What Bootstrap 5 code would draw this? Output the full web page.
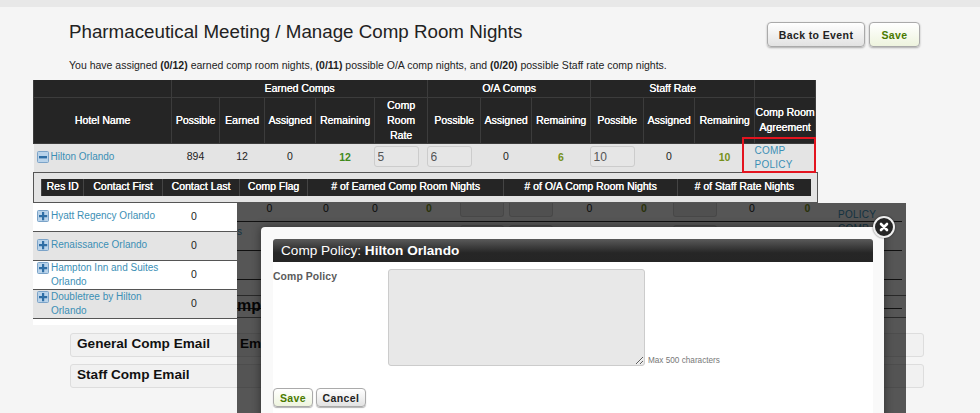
<!DOCTYPE html>
<html lang="en">
<head>
  <meta charset="UTF-8">
  <meta name="viewport" content="width=device-width, initial-scale=1.0">
  <title>Manage Comp Room Nights</title>
  <link rel="stylesheet" href="https://cdn.jsdelivr.net/npm/bootstrap@5.3.3/dist/css/bootstrap.min.css">
  <style>
    html, body { height: 413px; overflow: hidden; }
    body { background: #f5f5f5; font-family: "Liberation Sans", Arial, sans-serif; color: #222; font-size: 10.5px; }
    .page-wrap { position: relative; height: 413px; border-top: 7px solid #e8e8e8; overflow: hidden; }
    .head-row { padding: 13px 60px 0 69px; height: 47px; }
    .head-row h1 { font-size: 18.75px; font-weight: 400; margin: 0; line-height: 24px; color: #222; }
    .intro { margin: 0 0 0 69px; height: 26px; font-size: 10.5px; line-height: 22px; color: #222; }
    .top-btns { gap: 4px; margin-top: 2px; }
    .gloss-btn { font-family: inherit; font-size: 10.5px; font-weight: 700; letter-spacing: .4px; color: #222; padding: 0; height: 25px; line-height: 22px; border: 1px solid #aaa; border-radius: 4px; background: linear-gradient(#fff, #e2e2e2); box-shadow: 0 1px 2px rgba(0,0,0,.3); }
    .gloss-btn.go { color: #4a7a00; background: linear-gradient(#fff, #eef4de); }
    .btn-back { width: 98px; }
    .btn-save { width: 51px; }

    .main-wrap { position: relative; margin-left: 33px; width: 783px; }
    .grid-tbl { table-layout: fixed; width: 782px; border-collapse: collapse; margin: 0; }
    .grid-tbl th { background: #252525; color: #fff; font-weight: 400; text-shadow: .3px 0 0 #fff; text-align: center; vertical-align: middle; border: 1px solid #3c3c3c; border-top: 0; padding: 0 1px; line-height: 15px; font-size: 10.5px; }
    .grid-tbl tr.top-head th { height: 17px; }
    .grid-tbl tr.sub-head th { height: 46px; }
    .grid-tbl th.agree-head { padding: 0; white-space: nowrap; }
    .grid-tbl td { background: #e4e4e4; height: 27px; text-align: center; vertical-align: middle; padding: 0 0 2px; color: #222; font-size: 10.5px; }
    .grid-tbl td.hotel-cell { text-align: left; padding-left: 3px; }
    .hotel-link { color: #3b8fb5; text-decoration: none; font-size: 10px; line-height: 14px; }
    .pm-icon { width: 12px; height: 12px; vertical-align: -3px; margin-right: 2px; flex: none; }
    .grid-tbl td.num-go { font-weight: 700; color: #3f8a1c; padding: 0; }
    .grid-tbl td.num-olive { font-weight: 700; color: #76901a; padding: 0; }
    .rate-box { display: block; width: 45px; height: 21px; padding: 0 3px; margin-left: -1px; border: 1px solid #ccc; border-radius: 3px; background: #e6e6e6; color: #555; font-size: 12px; font-family: inherit; }
    .grid-tbl td.policy-cell { text-align: left; padding: 0; }
    .policy-link { display: block; color: #3b8fb5; text-decoration: none; font-size: 10px; letter-spacing: .25px; line-height: 14px; }
    .red-box { position: absolute; left: 709px; top: 57px; width: 74px; height: 36px; border: 2px solid #e3141f; pointer-events: none; }

    .res-box { margin-left: 33px; width: 785px; height: 31px; background: #e4e4e4; border: 1px solid #555; padding: 6px 8px 0 7px; }
    .res-tbl { table-layout: fixed; width: 769px; border-collapse: collapse; }
    .res-tbl th { background: #252525; color: #fff; height: 17px; font-size: 10.5px; font-weight: 400; text-shadow: .3px 0 0 #fff; text-align: center; padding: 0; border-left: 1px solid #444; white-space: nowrap; }

    .lower-wrap { height: 122px; }
    .hotel-side { margin-left: 33px; width: 204px; height: 122px; background: #fff; flex: none; }
    .hotel-row { height: 29px; border-bottom: 1px solid #555; padding-left: 4px; }
    .hotel-row.alt { background: #e4e4e4; }
    .hotel-row:nth-child(-n+2) .hotel-name { margin-bottom: 2px; }
    .hotel-name { width: 130px; flex: none; }
    .hotel-name .pm-icon { margin: 1px 2px 0 0; }
    .hotel-name .hotel-link { width: 116px; display: block; }
    .hotel-zero { width: 54px; text-align: center; color: #222; }
    .back-side { width: 665px; height: 122px; flex: none; position: relative; }
    .back-tbl { table-layout: fixed; width: 665px; border-collapse: collapse; }
    .back-tbl td { border-bottom: 1px solid #333; height: 29px; padding: 0; text-align: center; vertical-align: top; font-size: 10.5px; color: #222; }
    .back-tbl tr.cut td { height: 19px; line-height: 10px; }
    .back-tbl .rate-box { width: 44px; height: 21px; margin: 3px 0 0 2px; }
    .back-tbl tr.cut .rate-box { height: 14px; margin-top: 0; border-top: 0; border-radius: 0 0 3px 3px; }
    .back-tbl td.num-olive { font-weight: 700; color: #76901a; }
    .back-tbl td.back-link { color: #3b8fb5; font-size: 10px; text-align: left; letter-spacing: .25px; padding-left: 3px; line-height: 14px; }
    .back-tbl tr.cut td.back-link { padding-top: 6px; line-height: 12px; height: 19px; }
    .back-tbl td.tail-text { text-align: left; color: #3b8fb5; font-size: 10px; padding-top: 2px; }
    .back-head { position: absolute; left: 0; top: 92px; width: 669px; height: 23px; border-top: 1px solid #777; border-bottom: 1px solid #777; font-size: 16px; font-weight: 700; color: #111; line-height: 20px; overflow: hidden; }

    .mail-row { margin: 8px 56px 0 70px; height: 24px; border: 1px solid #ddd; border-radius: 3px; background: #f1f1f1; padding-left: 6px; font-size: 13.6px; font-weight: 700; color: #111; line-height: 20px; gap: 30px; }
    .mail-row + .mail-row { margin-top: 7px; }

    .dim-layer { position: absolute; left: 237px; top: 196px; width: 669px; height: 210px; background: rgba(0,0,0,.65); }
    .comp-modal { position: absolute; left: 24px; top: 24px; width: 623px; height: 200px; background: #f9f9f9; border-radius: 4px 4px 0 0; padding: 12px 11px 0 12px; box-shadow: 0 0 10px rgba(0,0,0,.45); }
    .comp-inner { background: #fff; height: 190px; }
    .comp-title { height: 23px; background: linear-gradient(#5a5a5a, #262626 60%, #252525); color: #fff; font-size: 13.6px; line-height: 23px; padding-left: 8px; border-radius: 3px 3px 0 0; }
    .comp-body { padding-top: 7px; }
    .comp-label { width: 115px; flex: none; font-size: 10.4px; font-weight: 700; color: #5a5a5a; letter-spacing: .1px; }
    .comp-text { width: 257px; height: 97px; background: #e8e8e8; border: 1px solid #ccc; border-radius: 3px; flex: none; display: block; }
    .comp-hint { font-size: 8.2px; color: #777; margin-left: 3px; align-self: flex-end; line-height: 10px; }
    .comp-btns { gap: 3px; margin-top: 22px; }
    .comp-btns .gloss-btn { height: 19px; line-height: 16px; box-shadow: 0 1px 1px rgba(0,0,0,.3); }
    .close-round { position: absolute; right: -11px; top: -11px; width: 22px; height: 22px; padding: 0; border: 2px solid #eee; border-radius: 50%; background: #252525; box-shadow: 0 0 2px rgba(0,0,0,.6); }
    .close-round svg { display: block; margin: 3px; }
  </style>
</head>
<body>
  <div class="page-wrap">
    <!-- Titulo e botoes -->
    <div class="head-row d-flex justify-content-between align-items-start">
      <h1>Pharmaceutical Meeting / Manage Comp Room Nights</h1>
      <div class="top-btns d-flex">
        <button type="button" class="gloss-btn btn-back">Back to Event</button>
        <button type="button" class="gloss-btn go btn-save">Save</button>
      </div>
    </div>
    <p class="intro">You have assigned <b>(0/12)</b> earned comp room nights, <b>(0/11)</b> possible O/A comp nights, and <b>(0/20)</b> possible Staff rate comp nights.</p>

    <!-- Tabela principal -->
    <div class="main-wrap">
      <table class="grid-tbl">
        <colgroup>
          <col style="width:138px"><col style="width:48px"><col style="width:45px"><col style="width:51px"><col style="width:59px"><col style="width:53px">
          <col style="width:53px"><col style="width:51px"><col style="width:59px"><col style="width:53px"><col style="width:51px"><col style="width:60px"><col style="width:61px">
        </colgroup>
        <tr class="top-head">
          <th></th>
          <th colspan="5">Earned Comps</th>
          <th colspan="3">O/A Comps</th>
          <th colspan="3">Staff Rate</th>
          <th></th>
        </tr>
        <tr class="sub-head">
          <th>Hotel Name</th><th>Possible</th><th>Earned</th><th>Assigned</th><th>Remaining</th><th>Comp Room Rate</th>
          <th>Possible</th><th>Assigned</th><th>Remaining</th><th>Possible</th><th>Assigned</th><th>Remaining</th><th class="agree-head">Comp Room<br>Agreement</th>
        </tr>
        <tr>
          <td class="hotel-cell"><a href="#" class="hotel-link"><svg class="pm-icon" viewBox="0 0 12 12"><rect x=".5" y=".5" width="11" height="11" rx="1" fill="#b9d3ea" stroke="#7ba3c8"/><rect x="2" y="5" width="8" height="2.4" fill="#2f6ea5"/></svg>Hilton Orlando</a></td>
          <td>894</td><td>12</td><td>0</td><td class="num-go">12</td>
          <td><input class="rate-box" value="5"></td>
          <td><input class="rate-box" value="6"></td>
          <td>0</td><td class="num-olive">6</td>
          <td><input class="rate-box" value="10"></td>
          <td>0</td><td class="num-olive">10</td>
          <td class="policy-cell"><a href="#" class="policy-link">COMP POLICY</a></td>
        </tr>
      </table>
      <div class="red-box"></div>
    </div>

    <!-- Reservas do hotel aberto -->
    <div class="res-box">
      <table class="res-tbl">
        <colgroup>
          <col style="width:42px"><col style="width:79px"><col style="width:77px"><col style="width:68px"><col style="width:196px"><col style="width:174px"><col style="width:133px">
        </colgroup>
        <tr>
          <th>Res ID</th><th>Contact First</th><th>Contact Last</th><th>Comp Flag</th><th># of Earned Comp Room Nights</th><th># of O/A Comp Room Nights</th><th># of Staff Rate Nights</th>
        </tr>
      </table>
    </div>

    <div class="lower-wrap d-flex">
      <div class="hotel-side">
        <div class="hotel-row d-flex align-items-center">
          <div class="hotel-name d-flex"><svg class="pm-icon" viewBox="0 0 12 12"><rect x=".5" y=".5" width="11" height="11" rx="1" fill="#b9d3ea" stroke="#7ba3c8"/><path d="M2 5h3V2h2.2v3h3v2.2h-3v3H5v-3H2z" fill="#2f6ea5"/></svg><a href="#" class="hotel-link">Hyatt Regency Orlando</a></div>
          <div class="hotel-zero">0</div>
        </div>
        <div class="hotel-row alt d-flex align-items-center">
          <div class="hotel-name d-flex"><svg class="pm-icon" viewBox="0 0 12 12"><rect x=".5" y=".5" width="11" height="11" rx="1" fill="#b9d3ea" stroke="#7ba3c8"/><path d="M2 5h3V2h2.2v3h3v2.2h-3v3H5v-3H2z" fill="#2f6ea5"/></svg><a href="#" class="hotel-link">Renaissance Orlando</a></div>
          <div class="hotel-zero">0</div>
        </div>
        <div class="hotel-row d-flex align-items-center">
          <div class="hotel-name d-flex"><svg class="pm-icon" viewBox="0 0 12 12"><rect x=".5" y=".5" width="11" height="11" rx="1" fill="#b9d3ea" stroke="#7ba3c8"/><path d="M2 5h3V2h2.2v3h3v2.2h-3v3H5v-3H2z" fill="#2f6ea5"/></svg><a href="#" class="hotel-link">Hampton Inn and Suites Orlando</a></div>
          <div class="hotel-zero">0</div>
        </div>
        <div class="hotel-row alt d-flex align-items-center">
          <div class="hotel-name d-flex"><svg class="pm-icon" viewBox="0 0 12 12"><rect x=".5" y=".5" width="11" height="11" rx="1" fill="#b9d3ea" stroke="#7ba3c8"/><path d="M2 5h3V2h2.2v3h3v2.2h-3v3H5v-3H2z" fill="#2f6ea5"/></svg><a href="#" class="hotel-link">Doubletree by Hilton Orlando</a></div>
          <div class="hotel-zero">0</div>
        </div>
      </div>
      <!-- Parte da tabela que fica atras do modal -->
      <div class="back-side">
        <table class="back-tbl">
          <colgroup>
            <col style="width:65px"><col style="width:48px"><col style="width:50px"><col style="width:58px"><col style="width:49px"><col style="width:55px">
            <col style="width:55px"><col style="width:54px"><col style="width:53px"><col style="width:56px"><col style="width:55px"><col style="width:67px">
          </colgroup>
          <tr class="cut">
            <td>0</td><td>0</td><td>0</td><td class="num-olive">0</td>
            <td><input class="rate-box"></td><td><input class="rate-box"></td>
            <td>0</td><td class="num-olive">0</td>
            <td><input class="rate-box"></td>
            <td>0</td><td class="num-olive">0</td>
            <td class="back-link">POLICY</td>
          </tr>
          <tr>
            <td class="tail-text">s</td><td></td><td></td><td></td>
            <td><input class="rate-box"></td><td><input class="rate-box"></td>
            <td></td><td></td>
            <td><input class="rate-box"></td>
            <td></td><td></td>
            <td class="back-link">COMP</td>
          </tr>
          <tr><td colspan="12"></td></tr>
          <tr><td colspan="12"></td></tr>
        </table>
        <div class="back-head">mp Emails</div>
      </div>
    </div>

    <div class="mail-row d-flex"><span>General Comp Email</span><span>Email</span></div>
    <div class="mail-row d-flex"><span>Staff Comp Email</span></div>

    <!-- Modal de politica -->
    <div class="dim-layer">
      <div class="comp-modal">
        <div class="comp-inner">
          <div class="comp-title">Comp Policy: <b>Hilton Orlando</b></div>
          <div class="comp-body">
            <div class="d-flex">
              <div class="comp-label">Comp Policy</div>
              <textarea class="comp-text"></textarea>
              <div class="comp-hint">Max 500 characters</div>
            </div>
            <div class="comp-btns d-flex">
              <button type="button" class="gloss-btn go" style="width:40px">Save</button>
              <button type="button" class="gloss-btn" style="width:50px">Cancel</button>
            </div>
          </div>
        </div>
        <button type="button" class="close-round" aria-label="Close"><svg width="12" height="12" viewBox="0 0 12 12"><path d="M3 3l6 6M9 3l-6 6" stroke="#fff" stroke-width="2.6" stroke-linecap="round"/></svg></button>
      </div>
    </div>
  </div>
</body>
</html>
